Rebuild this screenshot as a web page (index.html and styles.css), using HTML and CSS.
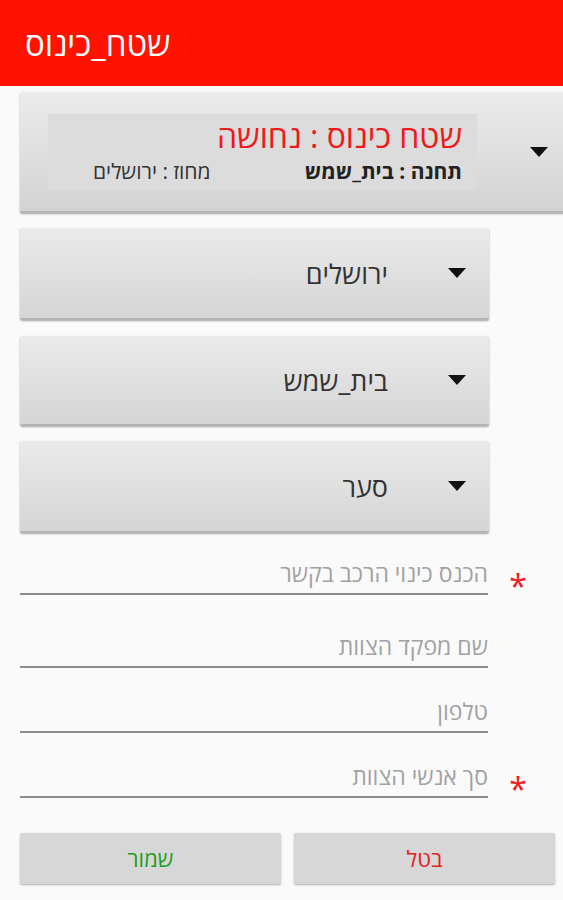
FILE: index.html
```html
<!DOCTYPE html>
<html lang="he">
    <head>
        <meta charset="utf-8">
        <title>שטח_כינוס</title>
        <link rel="stylesheet" href="styles.css">
    </head>
    <body>
    <div class="appbar"><span class="appbar-title">שטח_כינוס</span></div>

    <div class="page">
        <div class="area-card">
            <div class="area-info">
                <div class="area-name">שטח כינוס : נחושה</div>
                <div class="area-meta">
                    <span class="station">תחנה : בית_שמש</span>
                    <span class="district">מחוז : ירושלים</span>
                </div>
            </div>
            <span class="caret"></span>
        </div>

        <div class="spinner"><span class="spinner-text">ירושלים</span><span class="caret"></span></div>
        <div class="spinner"><span class="spinner-text">בית_שמש</span><span class="caret"></span></div>
        <div class="spinner"><span class="spinner-text">סער</span><span class="caret"></span></div>

        <div class="row row-first">
            <div class="field">הכנס כינוי הרכב בקשר</div>
            <span class="req">*</span>
        </div>
        <div class="row row-tall">
            <div class="field">שם מפקד הצוות</div>
            <span class="req"></span>
        </div>
        <div class="row">
            <div class="field">טלפון</div>
            <span class="req"></span>
        </div>
        <div class="row">
            <div class="field">סך אנשי הצוות</div>
            <span class="req">*</span>
        </div>

        <div class="buttons">
            <div class="btn btn-save">שמור</div>
            <div class="btn btn-cancel">בטל</div>
        </div>
    </div>
    </body>
</html>
```

FILE: styles.css
```css
*{padding:0; margin:0; box-sizing:border-box;}
body{background:#fafafa; font-family:"Open Sans", "Liberation Sans", "DejaVu Sans", sans-serif; overflow:hidden; width:563px; height:900px;}

.appbar{height:86px; background:#ff1300; padding-left:25px; display:flex; align-items:center;}
.appbar-title{color:#fff; font-size:33px; direction:rtl;}

.page{padding-left:20px;}

/* top spinner, runs past the right edge */
.area-card{margin-top:6px; width:560px; height:121px; display:flex; align-items:center; padding-left:28px;
    background:linear-gradient(#ececec, #d3d3d3); border-bottom:2px solid #b4b4b4; border-radius:2px; box-shadow:0 1px 2px rgba(0,0,0,.35);}
.area-info{width:429px; height:76px; background:#dcdcdc; direction:rtl; padding:1px 15px 0 45px;}
.area-name{color:#f01818; font-size:32px; line-height:42px;}
.area-meta{display:flex; justify-content:space-between; line-height:28px;}
.station{font-size:21px; font-weight:bold; color:#222;}
.district{font-size:21px; color:#333;}
.area-card .caret{margin-left:53px;}

.caret{width:0; height:0; border-left:9px solid transparent; border-right:9px solid transparent; border-top:10px solid #111;}

.spinner{width:469px; height:92px; margin-top:15px; display:flex; align-items:center; justify-content:flex-end;
    padding-right:23px; background:linear-gradient(#ebebeb, #d5d5d5); border-bottom:2px solid #b4b4b4; border-radius:2px; box-shadow:0 1px 2px rgba(0,0,0,.35);}
.spinner + .spinner{margin-top:16px; height:90px;}
.spinner + .spinner + .spinner{margin-top:15px; height:92px;}
.spinner-text{direction:rtl; font-size:27px; color:#333; margin-right:60px;}

.row{display:flex; align-items:flex-end; margin-top:19px;}
.row-first{margin-top:16px;}
.row-tall{margin-top:27px;}
.field{width:468px; height:46px; direction:rtl; border-bottom:2px solid #8c8c8c; color:#a2a2a2; font-size:23px; line-height:38px; padding-top:5px;}
.req{width:60px; text-align:center; color:#f21b1b; font-size:32px; line-height:30px; height:30px; margin-bottom:-6px;}

.buttons{display:flex; gap:13px; margin-top:35px;}
.btn{width:261px; height:51px; background:#d7d7d7; border-radius:2px; box-shadow:0 1px 2px rgba(0,0,0,.3);
    text-align:center; line-height:51px; font-size:22px; direction:rtl;}
.btn-save{color:#1e9e1e;}
.btn-cancel{color:#e8201e;}
```
